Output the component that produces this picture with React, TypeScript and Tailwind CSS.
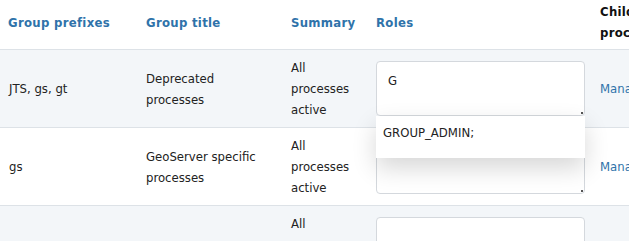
import React from 'react';

type Group = {
  prefixes: string;
  title: string;
  summary: string;
  roles: string;
};

const groups: Group[] = [
  { prefixes: 'JTS, gs, gt', title: 'Deprecated processes', summary: 'All processes active', roles: 'G' },
  { prefixes: 'gs', title: 'GeoServer specific processes', summary: 'All processes active', roles: '' },
  { prefixes: '', title: '', summary: 'All processes active', roles: '' },
];

const font = { fontFamily: '"DejaVu Sans Condensed", "DejaVu Sans", Verdana, sans-serif' };

const App: React.FC = () => {
  return (
    <div className="w-[629px] h-[241px] overflow-hidden bg-white text-[13px] leading-[21px] text-[#222]" style={font}>
      <table className="table-fixed border-collapse w-[760px]">
        <colgroup>
          <col className="w-[138px]" />
          <col className="w-[145px]" />
          <col className="w-[85px]" />
          <col className="w-[224px]" />
          <col className="w-[168px]" />
        </colgroup>
        <thead>
          <tr className="border-b border-[#dde2e7]">
            <th className="pl-2 pr-2 pt-px pb-[6px] text-left align-middle font-bold text-[#2f73aa] tracking-[0.3px]">Group prefixes</th>
            <th className="pl-2 pr-2 pt-px pb-[6px] text-left align-middle font-bold text-[#2f73aa] tracking-[0.3px]">Group title</th>
            <th className="pl-2 pr-2 pt-px pb-[6px] text-left align-middle font-bold text-[#2f73aa] tracking-[0.3px]">Summary</th>
            <th className="pl-2 pr-2 pt-px pb-[6px] text-left align-middle font-bold text-[#2f73aa] tracking-[0.3px]">Roles</th>
            <th className="pl-2 pr-10 pt-px pb-[6px] text-left align-middle font-bold text-[#111] tracking-[0.3px]">
              <div className="w-[70px]">Child processes</div>
            </th>
          </tr>
        </thead>
        <tbody>
          {groups.map((g, i) => (
            <tr key={i} className={`border-b border-[#dde2e7] ${i % 2 === 0 ? 'bg-[#f3f6f9]' : 'bg-white'}`}>
              {/* PREFIXES */}
              <td className="pl-[9px] pr-2 align-middle">{g.prefixes}</td>
              {/* TITLE */}
              <td className="pl-2 pr-2 align-middle">{g.title}</td>
              {/* SUMMARY */}
              <td className="pl-2 pr-2 align-middle">{g.summary}</td>
              {/* ROLES */}
              <td className="pl-2 pr-[7px] pt-[11px] pb-[11px] align-middle">
                <div className="relative">
                  <textarea
                    readOnly
                    value={g.roles}
                    className="block w-[209px] h-[55px] resize-none rounded-[4px] border border-[#d4d8dd] bg-white px-[11px] pt-[9px] pb-[5px] text-[13px] leading-[20px] text-[#222] outline-none"
                    style={font}
                  />
                  {/* resize grip */}
                  <span className="absolute right-[2px] bottom-[2px] w-[2px] h-[2px] bg-[#555]" />
                  {i === 0 && (
                    <div className="absolute left-0 top-full z-10 w-[209px] h-[42px] bg-white pl-[7px] pt-[6px] shadow-[0_10px_24px_rgba(0,0,0,0.16)]">
                      GROUP_ADMIN;
                    </div>
                  )}
                </div>
              </td>
              {/* CHILD PROCESSES */}
              <td className="pl-2 pr-2 align-middle">
                {g.title && <a className="text-[#2f73aa]">Manage</a>}
              </td>
            </tr>
          ))}
        </tbody>
      </table>
    </div>
  );
};

export default App;
